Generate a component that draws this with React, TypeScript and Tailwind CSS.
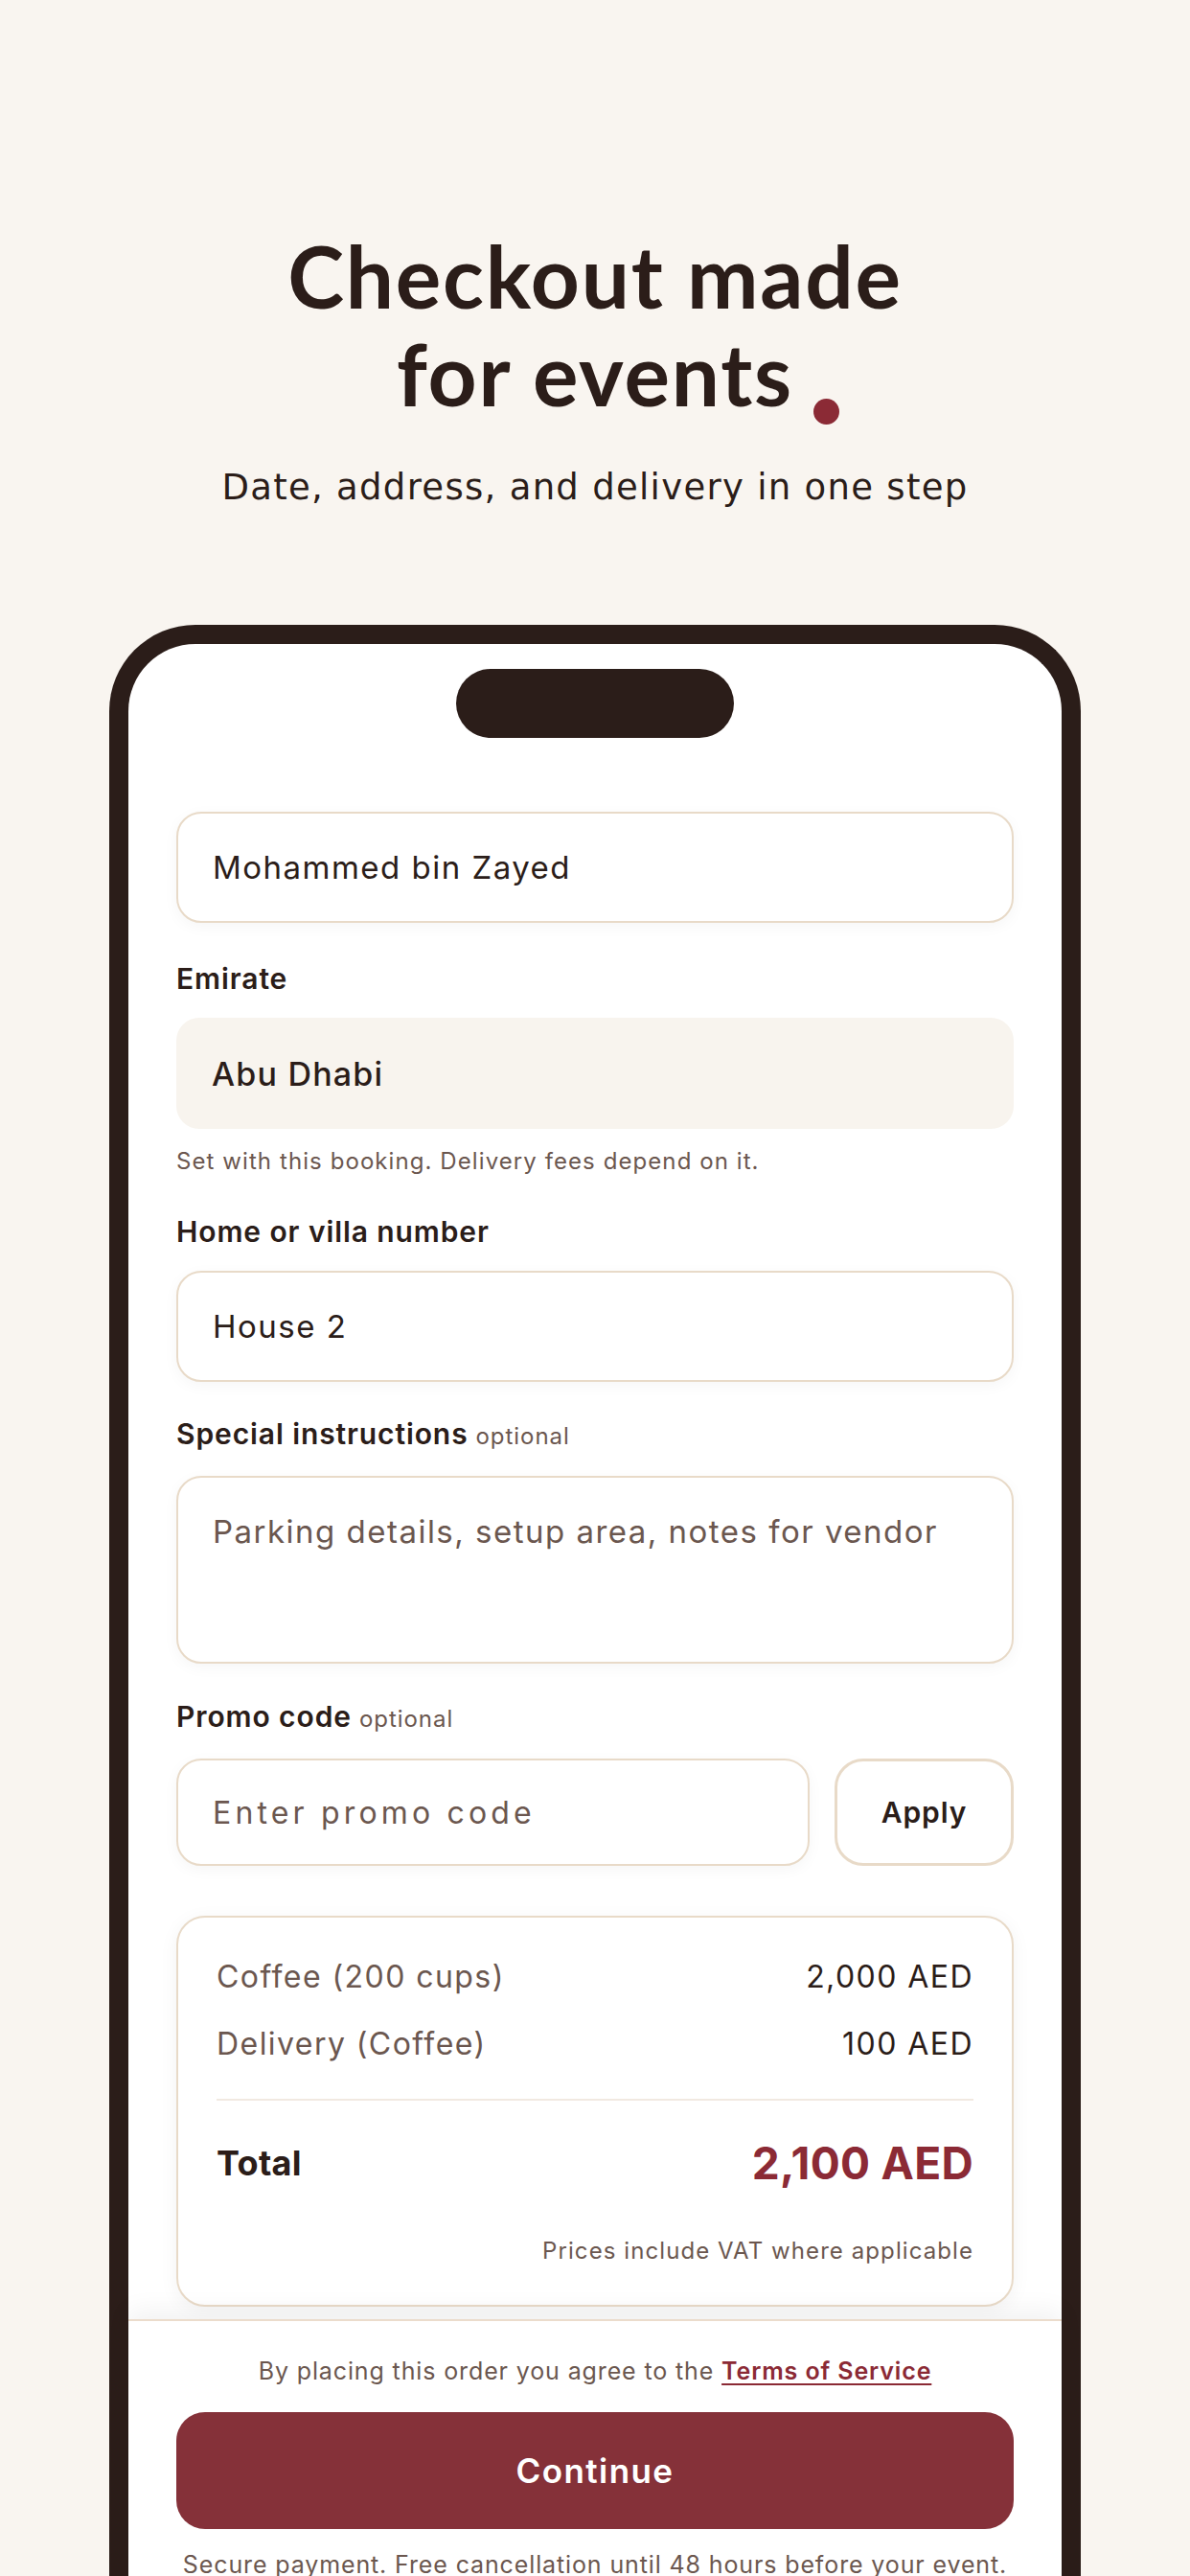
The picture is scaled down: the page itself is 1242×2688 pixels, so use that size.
import React from 'react';

const field =
  'h-[116px] w-full rounded-[26px] border-2 border-[#e8dac8] bg-white px-[36px] text-[33px] tracking-[0.045em] text-[#2b1d19] shadow-[0_4px_16px_rgba(0,0,0,0.04)] outline-none';

function Label({ children, optional }: { children: React.ReactNode; optional?: boolean }) {
  return (
    <div className="mb-[23px] text-[30px] font-semibold leading-[36px] tracking-[0.03em] text-[#2b1d19]">
      {children}
      {optional && (
        <span className="ml-[8px] text-[24px] font-normal tracking-[0.04em] text-[#6b574f]">optional</span>
      )}
    </div>
  );
}

function Row({ label, value }: { label: string; value: string }) {
  return (
    <div className="flex items-center justify-between text-[32px] leading-[44px] tracking-[0.045em]">
      <span className="text-[#6b574f]">{label}</span>
      <span className="text-[#2b1d19]">{value}</span>
    </div>
  );
}

export default function App() {
  return (
    <div className="h-[2688px] overflow-hidden bg-[#f9f5f0] font-['Inter',sans-serif] text-[#2b1d19]">
      <header className="pt-[237px] text-center">
        <h1 className="font-['Lato',sans-serif] text-[89px] font-bold leading-[102px] tracking-[0.02em]">
          Checkout made
          <br />
          <span className="relative">
            for events
            <span className="absolute bottom-0 left-full ml-[21px] h-[27px] w-[27px] rounded-full bg-[#8b2a35]" />
          </span>
        </h1>
        <p className="mt-[44px] font-['DejaVu_Sans',sans-serif] text-[37px] leading-[48px] tracking-[0.035em]">
          Date, address, and delivery in one step
        </p>
      </header>

      <div className="mx-auto mt-[119px] w-[1014px] rounded-t-[90px] border-[20px] border-b-0 border-[#2b1d19] bg-white">
        <div className="mx-auto mt-[26px] h-[72px] w-[290px] rounded-full bg-[#2b1d19]" />

        <div className="px-[50px] pt-[77px]">
          <input className={field} defaultValue="Mohammed bin Zayed" />

          <div className="mt-[40px]">
            <Label>Emirate</Label>
            <div className="flex h-[116px] items-center rounded-[24px] bg-[#f8f4ee] px-[37px] text-[34px] font-medium tracking-[0.035em]">
              Abu Dhabi
            </div>
            <p className="mt-[18px] text-[24px] leading-[32px] tracking-[0.045em] text-[#6b574f]">
              Set with this booking. Delivery fees depend on it.
            </p>
          </div>

          <div className="mt-[39px]">
            <Label>Home or villa number</Label>
            <input className={field} defaultValue="House 2" />
          </div>

          <div className="mt-[36px]">
            <Label optional>Special instructions</Label>
            <textarea
              className="block h-[196px] w-full resize-none rounded-[26px] border-2 border-[#e8dac8] bg-white px-[36px] pt-[34px] text-[33px] leading-[44px] tracking-[0.045em] text-[#2b1d19] shadow-[0_4px_16px_rgba(0,0,0,0.04)] outline-none placeholder:text-[#6b574f]"
              placeholder="Parking details, setup area, notes for vendor"
            />
          </div>

          <div className="mt-[37px]">
            <Label optional>Promo code</Label>
            <div className="flex gap-[26px]">
              <input
                className="h-[112px] min-w-0 flex-1 rounded-[26px] border-2 border-[#e8dac8] bg-white px-[36px] text-[32px] tracking-[0.13em] shadow-[0_4px_16px_rgba(0,0,0,0.04)] outline-none placeholder:text-[#6b574f]"
                placeholder="Enter promo code"
              />
              <button className="h-[112px] w-[187px] rounded-[30px] border-[3px] border-[#e8dac8] bg-white text-[30px] font-semibold tracking-[0.03em] text-[#2b1d19]">
                Apply
              </button>
            </div>
          </div>

          <div className="mt-[52px] rounded-[30px] border-2 border-[#e8dac8] bg-white px-[40px] pt-[40px] pb-[40px] shadow-[0_4px_20px_rgba(0,0,0,0.05)]">
            <div className="flex flex-col gap-[26px]">
              <Row label="Coffee (200 cups)" value="2,000 AED" />
              <Row label="Delivery (Coffee)" value="100 AED" />
            </div>
            <div className="mt-[35px] h-[2px] bg-[#f1e9e1]" />
            <div className="mt-[37px] flex items-center justify-between leading-[56px] tracking-[0.02em]">
              <span className="text-[36px] font-bold">Total</span>
              <span className="text-[46px] font-bold text-[#8b2a35]">2,100 AED</span>
            </div>
            <p className="mt-[48px] text-right text-[24px] leading-[32px] tracking-[0.045em] text-[#6b574f]">
              Prices include VAT where applicable
            </p>
          </div>
        </div>

        <div className="mt-[13px] border-t-2 border-[#ebdccc] bg-white px-[50px] pt-[35px] pb-[80px] shadow-[0_-10px_24px_rgba(0,0,0,0.05)]">
          <p className="text-center text-[25px] leading-[34px] tracking-[0.035em] text-[#6b574f]">
            By placing this order you agree to the{' '}
            <span className="font-semibold text-[#8b2a35] underline decoration-2 underline-offset-4">
              Terms of Service
            </span>
          </p>
          <button className="mt-[26px] h-[122px] w-full rounded-[30px] bg-[#853139] text-[35px] font-semibold tracking-[0.04em] text-white">
            Continue
          </button>
          <p className="mt-[20px] text-center text-[25px] leading-[34px] tracking-[0.035em] text-[#6b574f]">
            Secure payment. Free cancellation until 48 hours before your event.
          </p>
        </div>
      </div>
    </div>
  );
}
